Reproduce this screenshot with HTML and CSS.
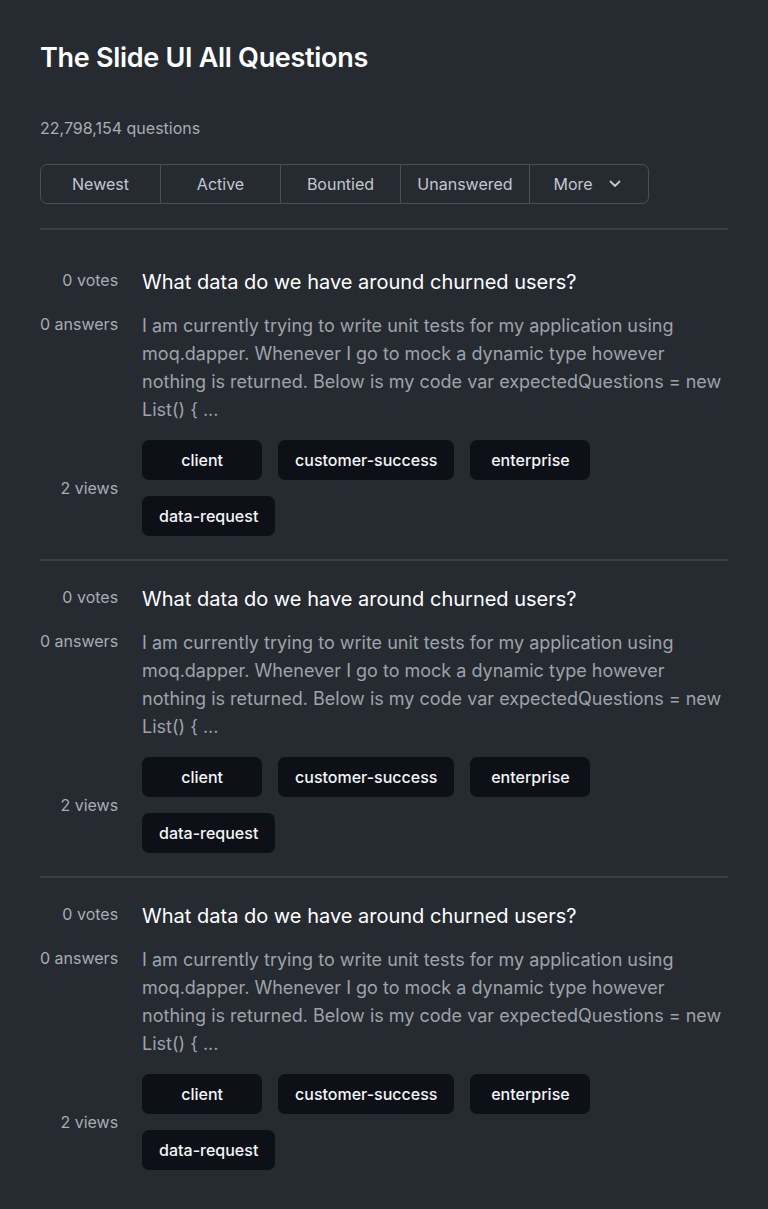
FILE: index.html
```html
<!DOCTYPE html>
<html lang="en">
<head>
<meta charset="utf-8">
<title>The Slide UI All Questions</title>
<link rel="stylesheet" href="styles.css">
</head>
<body>
<main class="page">
  <header class="header">
    <h1 class="title">The Slide UI All Questions</h1>
    <p class="count">22,798,154 questions</p>
    <nav class="filters">
      <button class="filter">Newest</button>
      <button class="filter">Active</button>
      <button class="filter">Bountied</button>
      <button class="filter filter-wide">Unanswered</button>
      <button class="filter filter-more">More
        <svg class="chev" width="12" height="8" viewBox="0 0 12 8" fill="none"><path d="M1.5 1.5 6 6l4.5-4.5" stroke="currentColor" stroke-width="1.8" stroke-linecap="round" stroke-linejoin="round"/></svg>
      </button>
    </nav>
  </header>

  <section class="list">
    <article class="question">
      <div class="stats">
        <span class="stat">0 votes</span>
        <span class="stat">0 answers</span>
        <span class="stat stat-views">2 views</span>
      </div>
      <div class="body">
        <h2 class="q-title">What data do we have around churned users?</h2>
        <p class="excerpt">I am currently trying to write unit tests for my application using moq.dapper. Whenever I go to mock a dynamic type however nothing is returned. Below is my code var expectedQuestions = new List() { ...</p>
        <div class="tags">
          <span class="tag">client</span>
          <span class="tag">customer-success</span>
          <span class="tag">enterprise</span>
          <span class="tag">data-request</span>
        </div>
      </div>
    </article>
    <article class="question">
      <div class="stats">
        <span class="stat">0 votes</span>
        <span class="stat">0 answers</span>
        <span class="stat stat-views">2 views</span>
      </div>
      <div class="body">
        <h2 class="q-title">What data do we have around churned users?</h2>
        <p class="excerpt">I am currently trying to write unit tests for my application using moq.dapper. Whenever I go to mock a dynamic type however nothing is returned. Below is my code var expectedQuestions = new List() { ...</p>
        <div class="tags">
          <span class="tag">client</span>
          <span class="tag">customer-success</span>
          <span class="tag">enterprise</span>
          <span class="tag">data-request</span>
        </div>
      </div>
    </article>
    <article class="question">
      <div class="stats">
        <span class="stat">0 votes</span>
        <span class="stat">0 answers</span>
        <span class="stat stat-views">2 views</span>
      </div>
      <div class="body">
        <h2 class="q-title">What data do we have around churned users?</h2>
        <p class="excerpt">I am currently trying to write unit tests for my application using moq.dapper. Whenever I go to mock a dynamic type however nothing is returned. Below is my code var expectedQuestions = new List() { ...</p>
        <div class="tags">
          <span class="tag">client</span>
          <span class="tag">customer-success</span>
          <span class="tag">enterprise</span>
          <span class="tag">data-request</span>
        </div>
      </div>
    </article>
  </section>
</main>
</body>
</html>
```

FILE: styles.css
```css
* { box-sizing: border-box; }
html, body {
  margin: 0;
  padding: 0;
  background: #262a31;
}
body {
  font-family: Inter, "Noto Sans", "Liberation Sans", sans-serif;
  color: #ffffff;
}
.page {
  padding: 40px 40px 0 40px;
  width: 768px;
}
.header {
  padding-bottom: 24px;
  border-bottom: 2px solid #3a3f47;
}
.title {
  margin: 0;
  font-size: 27px;
  line-height: 36px;
  font-weight: 600;
  color: #ffffff;
  letter-spacing: -0.3px;
}
.count {
  margin: 40px 0 0 0;
  font-size: 16px;
  line-height: 24px;
  color: #a8adb4;
}
.filters {
  margin-top: 24px;
  display: flex;
  width: 609px;
  height: 40px;
  border: 1px solid #4a5059;
  border-radius: 7px;
  overflow: hidden;
}
.filter {
  flex: 0 0 120px;
  display: flex;
  align-items: center;
  justify-content: center;
  gap: 16px;
  background: transparent;
  border: 0;
  border-right: 1px solid #4a5059;
  font-family: inherit;
  font-size: 16px;
  color: #c3c7cd;
  padding: 0;
}
.filter-wide { flex-basis: 129px; }
.filter-more { border-right: 0; flex: 1 1 auto; padding-right: 4px; }
.chev { display: block; color: #c3c7cd; }

.list { padding-top: 14px; }
.question {
  display: flex;
  padding: 24px 0 23px 0;
  border-bottom: 2px solid #3a3f47;
}
.question:last-child { border-bottom: 0; }
.stats {
  flex: 0 0 78px;
  display: flex;
  flex-direction: column;
  align-items: flex-end;
  padding-top: 2px;
  padding-bottom: 38px;
}
.stat {
  font-size: 16px;
  line-height: 20px;
  color: #a8adb4;
  white-space: nowrap;
}
.stat + .stat { margin-top: 24px; }
.stat-views { margin-top: auto !important; }
.body {
  flex: 1 1 auto;
  margin-left: 24px;
}
.q-title {
  margin: 0;
  font-size: 20px;
  line-height: 28px;
  font-weight: 400;
  color: #ffffff;
}
.excerpt {
  margin: 16px 0 0 0;
  font-size: 18px;
  line-height: 28px;
  color: #9ea3aa;
}
.tags {
  margin-top: 16px;
  display: flex;
  flex-wrap: wrap;
  gap: 16px;
}
.tag {
  min-width: 120px;
  height: 40px;
  padding: 0 17px;
  display: inline-flex;
  align-items: center;
  justify-content: center;
  background: #0d1117;
  border-radius: 7px;
  font-size: 16px;
  font-weight: 500;
  color: #f4f5f7;
}
```
